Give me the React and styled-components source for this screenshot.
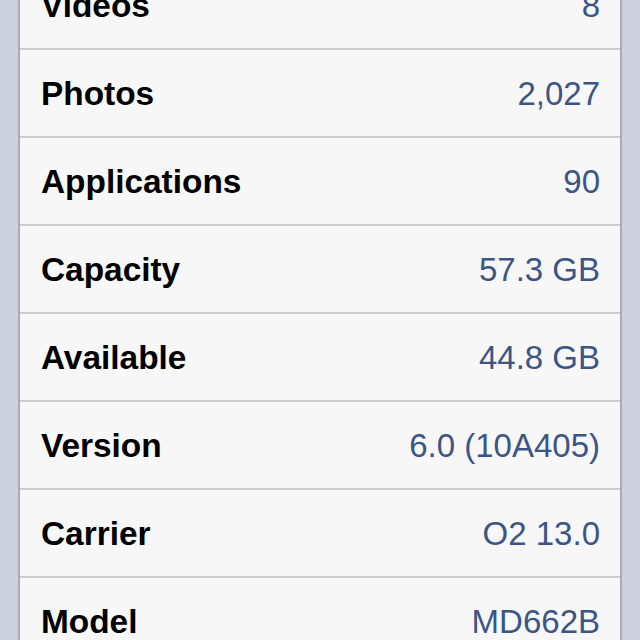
import React from "react";
import styled, { createGlobalStyle } from "styled-components";

const Global = createGlobalStyle`
  html, body {
    margin: 0;
    padding: 0;
    height: 640px;
    overflow: hidden;
    background: #cbd1dd;
  }
  #root { height: 640px; overflow: hidden; }
`;

const Page = styled.div`
  width: 640px;
  height: 640px;
  overflow: hidden;
  background: #cbd1dd;
  padding: 0 18px;
  box-sizing: border-box;
`;

const Card = styled.div`
  margin-top: -38px;
  background: #f7f7f7;
  border-left: 2px solid #a9adb5;
  border-right: 2px solid #a9adb5;
`;

const Row = styled.div`
  box-sizing: border-box;
  height: 88px;
  border-bottom: 2px solid #cbcbcb;
  display: flex;
  align-items: center;
  justify-content: space-between;
  padding: 2px 20px 0 21px;
  font-family: "Liberation Sans", Arial, Helvetica, sans-serif;
  font-size: 33px;
`;

const Label = styled.span`
  font-weight: bold;
  font-size: 33.4px;
  color: #000;
`;

const Value = styled.span`
  color: #3b5585;
`;

const rows = [
  ["Videos", "8"],
  ["Photos", "2,027"],
  ["Applications", "90"],
  ["Capacity", "57.3 GB"],
  ["Available", "44.8 GB"],
  ["Version", "6.0 (10A405)"],
  ["Carrier", "O2 13.0"],
  ["Model", "MD662B"],
];

export default function App() {
  return (
    <>
      <Global />
      <Page>
        <Card>
          {rows.map(([l, v]) => (
            <Row key={l}>
              <Label>{l}</Label>
              <Value>{v}</Value>
            </Row>
          ))}
        </Card>
      </Page>
    </>
  );
}
